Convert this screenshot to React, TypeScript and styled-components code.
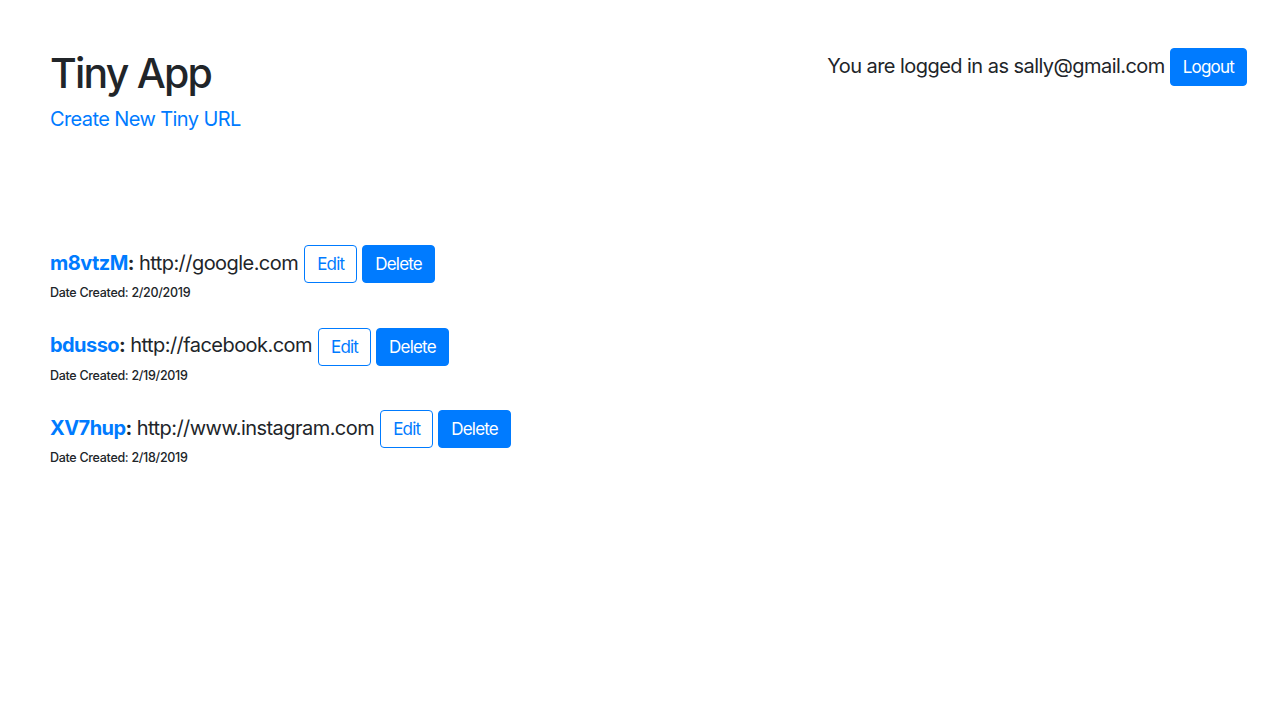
import React from "react";
import styled, { createGlobalStyle } from "styled-components";

const GlobalStyle = createGlobalStyle`
  body {
    margin: 0;
    background: #fff;
    color: #212529;
    font-family: Inter, "Noto Sans", "Liberation Sans", sans-serif;
  }
`;

const Page = styled.div`
  padding: 48px 33px 0 50px;
`;

const Header = styled.header`
  display: flex;
  justify-content: space-between;
  align-items: flex-start;
`;

const Brand = styled.div`
  display: flex;
  flex-direction: column;
`;

const Title = styled.h1`
  margin: 0;
  font-size: 41px;
  font-weight: 500;
  line-height: 50px;
  letter-spacing: -1.8px;
`;

const NavLink = styled.a`
  color: #007bff;
  font-size: 20px;
  line-height: 28px;
  margin-top: 7px;
  letter-spacing: -0.6px;
  text-decoration: none;
`;

const Account = styled.div`
  display: flex;
  align-items: center;
  gap: 5px;
`;

const AccountText = styled.span`
  font-size: 20px;
  line-height: 28px;
  margin-top: -3px;
  letter-spacing: -0.55px;
`;

const Button = styled.button<{ $outline?: boolean }>`
  font-family: inherit;
  font-size: 17px;
  line-height: 24px;
  letter-spacing: -0.8px;
  padding: 6px 12px;
  border-radius: 4px;
  border: 1px solid #007bff;
  background: ${(p) => (p.$outline ? "#fff" : "#007bff")};
  color: ${(p) => (p.$outline ? "#007bff" : "#fff")};
  cursor: pointer;
`;

const List = styled.ul`
  list-style: none;
  margin: 112px 0 0;
  padding: 0;
  display: flex;
  flex-direction: column;
  gap: 25.5px;
`;

const Item = styled.li`
  display: flex;
  flex-direction: column;
`;

const Line = styled.div`
  display: flex;
  align-items: center;
  gap: 5px;
`;

const UrlText = styled.span`
  font-size: 20px;
  line-height: 28px;
  margin-top: -3px;
  margin-right: 1px;
  letter-spacing: -0.55px;
`;

const Short = styled.a`
  color: #007bff;
  font-weight: 700;
  text-decoration: none;
`;

const Colon = styled.b`
  font-weight: 700;
`;

const DateLine = styled.small`
  font-size: 12.5px;
  font-weight: 500;
  line-height: 18px;
  margin-top: 1px;
  letter-spacing: -0.3px;
`;

const urls = [
  { id: "m8vtzM", long: "http://google.com", date: "2/20/2019" },
  { id: "bdusso", long: "http://facebook.com", date: "2/19/2019" },
  { id: "XV7hup", long: "http://www.instagram.com", date: "2/18/2019" },
];

export default function App() {
  return (
    <>
      <GlobalStyle />
      <Page>
        <Header>
          <Brand>
            <Title>Tiny App</Title>
            <NavLink href="#">Create New Tiny URL</NavLink>
          </Brand>
          <Account>
            <AccountText>You are logged in as sally@gmail.com</AccountText>
            <Button>Logout</Button>
          </Account>
        </Header>
        <List>
          {urls.map((u) => (
            <Item key={u.id}>
              <Line>
                <UrlText>
                  <Short href="#">{u.id}</Short>
                  <Colon>:</Colon> {u.long}
                </UrlText>
                <Button $outline>Edit</Button>
                <Button>Delete</Button>
              </Line>
              <DateLine>Date Created: {u.date}</DateLine>
            </Item>
          ))}
        </List>
      </Page>
    </>
  );
}
